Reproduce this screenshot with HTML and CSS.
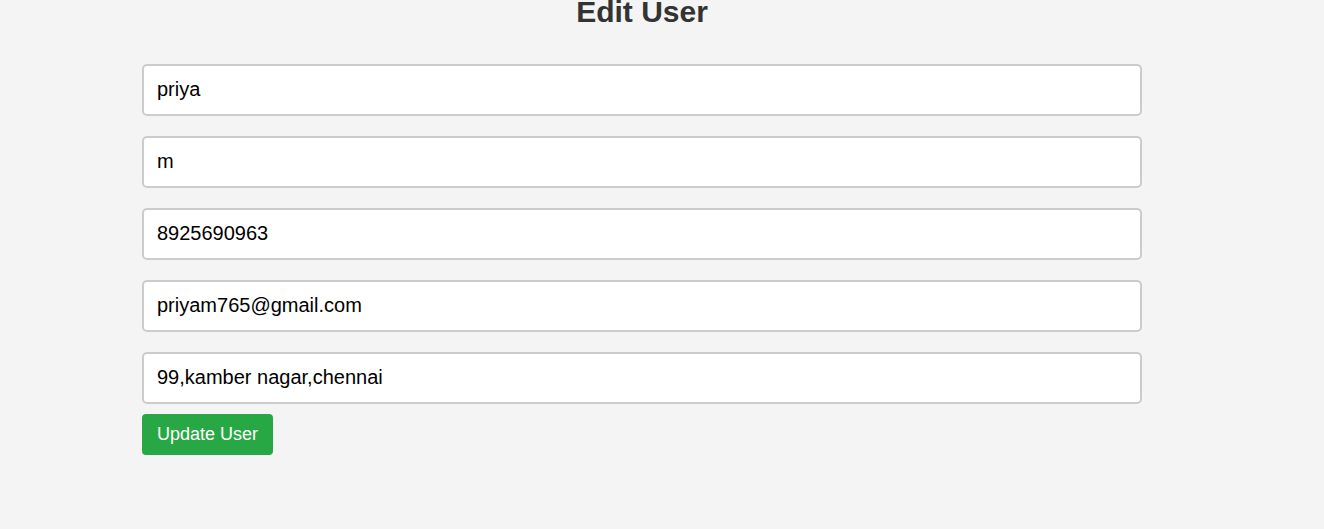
FILE: index.html
```html
<!DOCTYPE html>
<html>
<head>
<meta charset="utf-8">
<link rel="stylesheet" href="styles.css">
</head>
<body>
<div class="page">
  <h1 class="title">Edit User</h1>
  <form class="form">
    <input class="field" type="text" value="priya">
    <input class="field" type="text" value="m">
    <input class="field" type="text" value="8925690963">
    <input class="field" type="text" value="priyam765@gmail.com">
    <input class="field" type="text" value="99,kamber nagar,chennai">
    <button class="btn" type="button">Update User</button>
  </form>
</div>
</body>
</html>
```
FILE: styles.css
```css
html, body {
  margin: 0;
  padding: 0;
  background: #f4f4f4;
  font-family: "Liberation Sans", Arial, sans-serif;
}
.page {
  width: 1000px;
  margin-left: 142px;
}
.title {
  margin: -5px 0 0 0;
  font-size: 30px;
  font-weight: bold;
  color: #333;
  text-align: center;
  line-height: 34px;
}
.form {
  display: flex;
  flex-direction: column;
  align-items: flex-start;
  margin-top: 35px;
}
.field {
  box-sizing: border-box;
  width: 1000px;
  height: 52px;
  margin: 0 0 20px 0;
  padding: 0 13px 2px 13px;
  border: 2px solid #ccc;
  border-radius: 5px;
  background: #fff;
  font-family: "Liberation Sans", Arial, sans-serif;
  font-size: 20px;
  color: #000;
  outline: none;
}
.field:last-of-type {
  margin-bottom: 10px;
}
.btn {
  box-sizing: border-box;
  height: 41px;
  padding: 0 15px;
  border: none;
  border-radius: 4px;
  background: #28a745;
  color: #fff;
  font-family: "Liberation Sans", Arial, sans-serif;
  font-size: 18px;
  cursor: pointer;
}
```
